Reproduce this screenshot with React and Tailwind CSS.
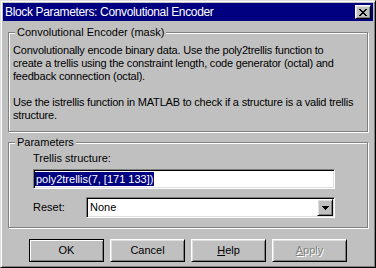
import React from "react";

const raised =
  "border border-t-white border-l-white border-b-black border-r-black shadow-[inset_1px_1px_0_#dfdfdf,inset_-1px_-1px_0_#808080]";
const sunken =
  "border border-t-[#808080] border-l-[#808080] border-b-white border-r-white shadow-[inset_1px_1px_0_#000,inset_-1px_-1px_0_#dfdfdf]";
const etched =
  "border border-[#808080] shadow-[inset_1px_1px_0_#fff,1px_1px_0_#fff]";

function Group({ label, className = "", children }) {
  return (
    <fieldset className={`${etched} p-0 m-0 ${className}`}>
      <legend className="ml-[6px] px-[2px] bg-[#c0c0c0] leading-[13px]">{label}</legend>
      {children}
    </fieldset>
  );
}

function Button({ children, def, disabled }) {
  const frame = def
    ? "border border-black shadow-[inset_1px_1px_0_#fff,inset_-1px_-1px_0_#808080]"
    : raised;
  return (
    <button
      type="button"
      className={`${frame} w-[75px] h-[23px] bg-[#c0c0c0] flex items-center justify-center ${
        disabled ? "text-[#808080] [text-shadow:1px_1px_0_#fff]" : "text-black"
      }`}
    >
      {children}
    </button>
  );
}

export default function App() {
  return (
    <div className="w-[376px] h-[268px] bg-[#c0c0c0] border border-t-[#dfdfdf] border-l-[#dfdfdf] border-b-black border-r-black shadow-[inset_1px_1px_0_#fff,inset_-1px_-1px_0_#808080] p-[2px] flex flex-col font-['Liberation_Sans',Arial,sans-serif] text-[11px] leading-[13px] text-black">
      {/* Title bar */}
      <div className="h-[18px] bg-[#000080] flex items-center justify-between pl-[2px] pr-[2px]">
        <span className="text-white text-[12px] tracking-[-0.35px]">Block Parameters: Convolutional Encoder</span>
        <div className={`${raised} w-[16px] h-[14px] bg-[#c0c0c0] flex items-center justify-center`}>
          <svg width="8" height="7" viewBox="0 0 8 7" shapeRendering="crispEdges">
            <path d="M0 0h2v1H0zM6 0h2v1H6zM1 1h2v1H1zM5 1h2v1H5zM2 2h4v1H2zM3 3h2v1H3zM2 4h4v1H2zM1 5h2v1H1zM5 5h2v1H5zM0 6h2v1H0zM6 6h2v1H6z" fill="#000" />
          </svg>
        </div>
      </div>

      <div className="px-[5px]">
        {/* Description */}
        <Group label="Convolutional Encoder (mask)" className="mt-[5px]">
          <div className="pt-[5px] pl-[4px] pb-[9px] whitespace-nowrap tracking-[-0.2px]">
            <div>Convolutionally encode binary data. Use the poly2trellis function to</div>
            <div>create a trellis using the constraint length, code generator (octal) and</div>
            <div>feedback connection (octal).</div>
            <div>&nbsp;</div>
            <div>Use the istrellis function in MATLAB to check if a structure is a valid trellis</div>
            <div>structure.</div>
          </div>
        </Group>

        {/* Parameters */}
        <Group label="Parameters" className="mt-[4px]">
          <div className="pt-[3px] pl-[24px] pb-[9px]">
            <div>Trellis structure:</div>
            <div className={`${sunken} mt-[4px] w-[302px] h-[20px] bg-white flex items-center pl-[1px]`}>
              <span className="bg-[#000080] text-white leading-[14px] px-[1px]">poly2trellis(7, [171 133])</span>
            </div>
            <div className="mt-[8px] flex items-center">
              <span className="w-[53px]">Reset:</span>
              <div className={`${sunken} w-[249px] h-[21px] bg-white flex items-center justify-between pl-[3px] pr-[1px]`}>
                <span>None</span>
                <div className={`${raised} w-[16px] h-[17px] bg-[#c0c0c0] flex items-center justify-center`}>
                  <svg width="7" height="4" viewBox="0 0 7 4" shapeRendering="crispEdges">
                    <path d="M0 0h7v1H0zM1 1h5v1H1zM2 2h3v1H2zM3 3h1v1H3z" fill="#000" />
                  </svg>
                </div>
              </div>
            </div>
          </div>
        </Group>
      </div>

      {/* Buttons */}
      <div className="mt-[11px] ml-[26px] flex gap-[6px]">
        <Button def>OK</Button>
        <Button>Cancel</Button>
        <Button>
          <span><span className="underline">H</span>elp</span>
        </Button>
        <Button disabled>
          <span><span className="underline">A</span>pply</span>
        </Button>
      </div>
    </div>
  );
}
